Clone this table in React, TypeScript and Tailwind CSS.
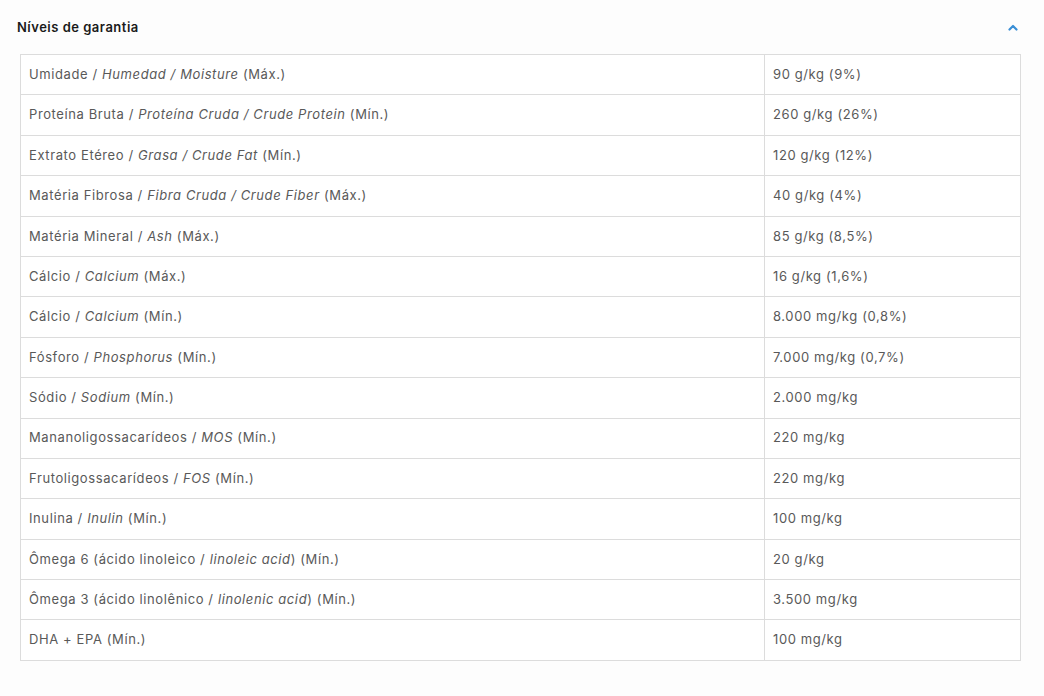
import React from 'react';

type Row = { label: React.ReactNode; value: string };

const rows: Row[] = [
  { label: <>Umidade / <i>Humedad / Moisture</i> (Máx.)</>, value: '90 g/kg (9%)' },
  { label: <>Proteína Bruta / <i>Proteína Cruda / Crude Protein</i> (Mín.)</>, value: '260 g/kg (26%)' },
  { label: <>Extrato Etéreo / <i>Grasa / Crude Fat</i> (Mín.)</>, value: '120 g/kg (12%)' },
  { label: <>Matéria Fibrosa / <i>Fibra Cruda / Crude Fiber</i> (Máx.)</>, value: '40 g/kg (4%)' },
  { label: <>Matéria Mineral / <i>Ash</i> (Máx.)</>, value: '85 g/kg (8,5%)' },
  { label: <>Cálcio / <i>Calcium</i> (Máx.)</>, value: '16 g/kg (1,6%)' },
  { label: <>Cálcio / <i>Calcium</i> (Mín.)</>, value: '8.000 mg/kg (0,8%)' },
  { label: <>Fósforo / <i>Phosphorus</i> (Mín.)</>, value: '7.000 mg/kg (0,7%)' },
  { label: <>Sódio / <i>Sodium</i> (Mín.)</>, value: '2.000 mg/kg' },
  { label: <>Mananoligossacarídeos / <i>MOS</i> (Mín.)</>, value: '220 mg/kg' },
  { label: <>Frutoligossacarídeos / <i>FOS</i> (Mín.)</>, value: '220 mg/kg' },
  { label: <>Inulina / <i>Inulin</i> (Mín.)</>, value: '100 mg/kg' },
  { label: <>Ômega 6 (ácido linoleico / <i>linoleic acid</i>) (Mín.)</>, value: '20 g/kg' },
  { label: <>Ômega 3 (ácido linolênico / <i>linolenic acid</i>) (Mín.)</>, value: '3.500 mg/kg' },
  { label: <>DHA + EPA (Mín.)</>, value: '100 mg/kg' },
];

const App: React.FC = () => {
  return (
    <div className="min-h-screen bg-[#fdfdfd] font-['Inter',sans-serif]">
      {/* Accordion header */}
      <div className="flex items-center justify-between pl-[17px] pr-[26px] pt-[17px] pb-[17px]">
        <h3 className="text-[13px] font-semibold tracking-[0.5px] text-[#1a1a1a] leading-5">Níveis de garantia</h3>
        <svg width="10" height="7" viewBox="0 0 10 7" className="text-[#3a8fd6]">
          <polyline points="1.5,5.5 5,2 8.5,5.5" fill="none" stroke="currentColor" strokeWidth="2.2" strokeLinecap="round" strokeLinejoin="round" />
        </svg>
      </div>

      {/* Table */}
      <div className="pl-[20px] pr-[23px]">
        <table className="w-[1001px] border-collapse bg-white text-[13px] tracking-[0.6px] text-[#595959]">
          <tbody>
            {rows.map((r, i) => (
              <tr key={i} className="h-[40.4px]">
                <td className="w-[744px] border border-[#dcdcdc] px-2 py-0 align-middle">{r.label}</td>
                <td className="border border-[#dcdcdc] px-2 py-0 align-middle">{r.value}</td>
              </tr>
            ))}
          </tbody>
        </table>
      </div>
    </div>
  );
};

export default App;
